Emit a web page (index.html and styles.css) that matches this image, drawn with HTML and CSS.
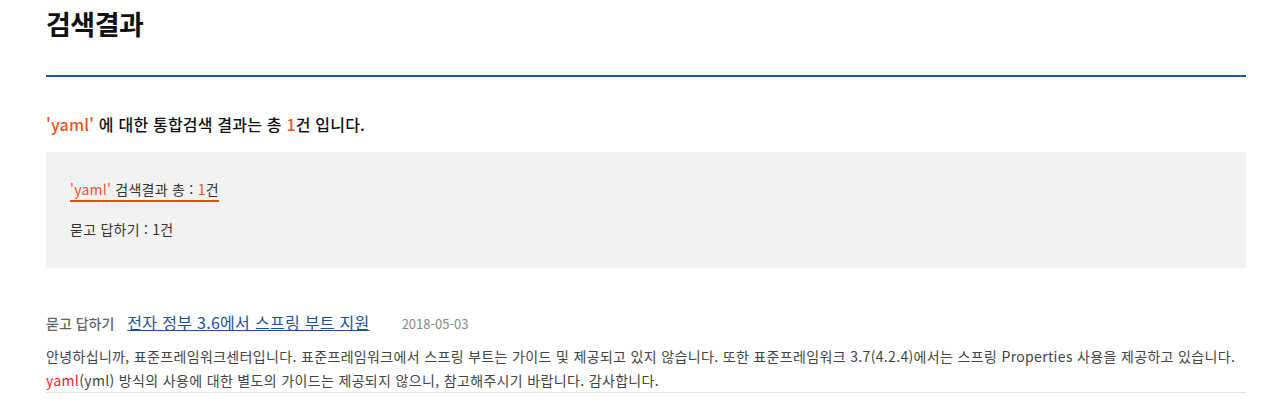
FILE: index.html
```html
<!DOCTYPE html>
<html lang="ko">
<head>
<meta charset="utf-8">
<title>검색결과</title>
<link rel="stylesheet" href="styles.css">
</head>
<body>
<div class="wrap">
  <h1 class="title">검색결과</h1>
  <p class="summary"><span class="hl">'yaml'</span> 에 대한 통합검색 결과는 총 <span class="hl">1</span>건 입니다.</p>
  <div class="box">
    <div class="box-row active"><span class="hl">'yaml'</span> 검색결과 총 : <span class="hl">1</span>건</div>
    <div class="box-row">묻고 답하기 : <span class="num">1</span>건</div>
  </div>
  <div class="result">
    <div class="result-head">
      <span class="cat">묻고 답하기</span>
      <a class="link" href="#">전자 정부 3.6에서 스프링 부트 지원</a>
      <span class="date">2018-05-03</span>
    </div>
    <p class="desc">안녕하십니까, 표준프레임워크센터입니다. 표준프레임워크에서 스프링 부트는 가이드 및 제공되고 있지 않습니다. 또한 표준프레임워크 3.7(4.2.4)에서는 스프링 Properties 사용을 제공하고 있습니다.<br><span class="red">yaml</span>(yml) 방식의 사용에 대한 별도의 가이드는 제공되지 않으니, 참고해주시기 바랍니다. 감사합니다.</p>
  </div>
</div>
</body>
</html>
```
FILE: styles.css
```css
* { box-sizing: border-box; }
html, body { margin: 0; padding: 0; background: #fff; }
body {
  font-family: "Noto Sans CJK KR", "Noto Sans", sans-serif;
  color: #222;
}
.wrap {
  width: 1200px;
  margin-left: 46px;
}
.title {
  margin: 0;
  padding-top: 4px;
  height: 77px;
  font-size: 27px;
  font-weight: 700;
  letter-spacing: -0.5px;
  line-height: 40px;
  color: #111;
  border-bottom: 2px solid #1a56b0;
}
.summary {
  margin: 0;
  padding-top: 35px;
  height: 75px;
  font-size: 16px;
  font-weight: 500;
  line-height: 24px;
  letter-spacing: 0.2px;
  color: #111;
}
.hl { color: #f0541e; }
.box {
  background: #f2f2f2;
  height: 116px;
  padding: 26px 24px 0;
  display: flex;
  flex-direction: column;
  align-items: flex-start;
  gap: 16px;
}
.box-row {
  font-size: 14px;
  line-height: 22px;
  color: #333;
  letter-spacing: 0.25px;
}
.box-row.active {
  border-bottom: 2px solid #ee4a0a;
}
.num { color: #333; }
.result {
  padding-top: 42px;
  border-bottom: 1px solid #e2e2e2;
}
.result-head {
  display: flex;
  align-items: baseline;
  height: 30px;
}
.cat {
  font-size: 14px;
  font-weight: 500;
  color: #666;
  letter-spacing: 0;
  margin-right: 13px;
}
.link {
  font-size: 16px;
  font-weight: 400;
  color: #1d4f9e;
  text-decoration: underline;
  letter-spacing: 0.3px;
  margin-right: 32px;
}
.date {
  font-size: 13px;
  color: #888;
}
.desc {
  margin: 4px 0 0;
  font-size: 14px;
  line-height: 24px;
  color: #444;
  letter-spacing: 0.34px;
  padding-bottom: 0;
}
.red { color: #ff1a1a; }
```
